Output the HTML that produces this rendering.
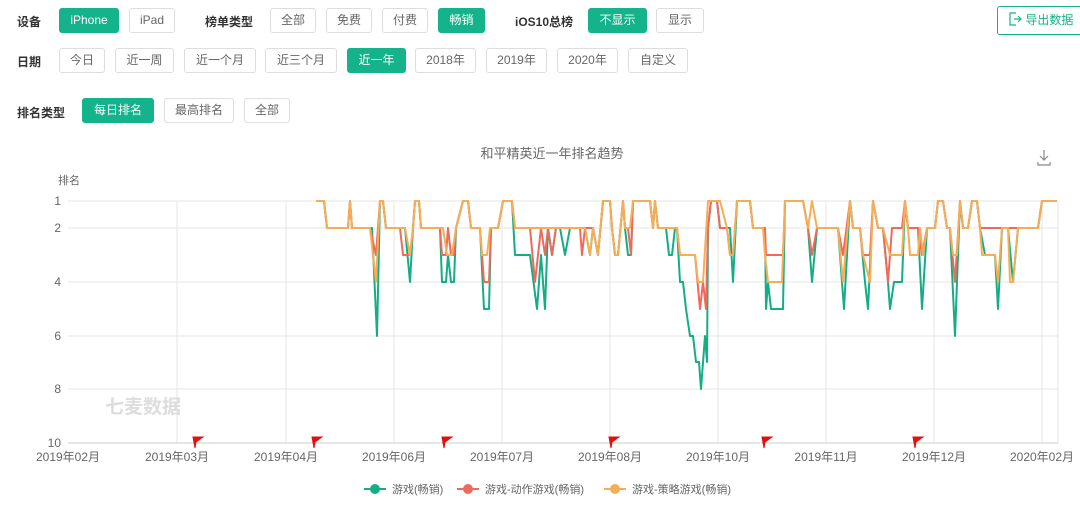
<!DOCTYPE html><html><head><meta charset="utf-8"><style>
body{margin:0;width:1080px;height:509px;background:#fff;font-family:"Liberation Sans","Noto Sans CJK SC",sans-serif;position:relative;overflow:hidden}
.l{position:absolute;font-size:12px;font-weight:bold;color:#333}
.b{position:absolute;height:23px;line-height:23px;border:1px solid #ddd;border-radius:3px;font-size:12px;color:#666;text-align:center;box-sizing:border-box;height:25px}
.a{background:#14b38b;border-color:#14b38b;color:#fff}
svg{position:absolute;left:0;top:0}
</style></head><body>
<div class="l" style="left:17px;top:13px">设备</div>
<div class="b a" style="left:59px;top:8px;width:60px">iPhone</div>
<div class="b" style="left:129px;top:8px;width:46px">iPad</div>
<div class="l" style="left:205px;top:13px">榜单类型</div>
<div class="b" style="left:270px;top:8px;width:46px">全部</div>
<div class="b" style="left:326px;top:8px;width:46px">免费</div>
<div class="b" style="left:382px;top:8px;width:46px">付费</div>
<div class="b a" style="left:438px;top:8px;width:47px">畅销</div>
<div class="l" style="left:515px;top:13px">iOS10总榜</div>
<div class="b a" style="left:588px;top:8px;width:59px">不显示</div>
<div class="b" style="left:656px;top:8px;width:48px">显示</div>
<div class="b" style="left:997px;top:6px;width:90px;height:29px;line-height:27px;border-color:#14b38b;color:#14b38b;text-align:left;padding-left:10px">
<svg width="14" height="14" style="position:relative;display:inline-block;vertical-align:-2px" viewBox="0 0 14 14"><path d="M8 1H2v12h6M6 7h7M10 4l3 3-3 3" fill="none" stroke="#14b38b" stroke-width="1.2"/></svg> 导出数据</div>
<div class="l" style="left:17px;top:53px">日期</div>
<div class="b" style="left:59px;top:48px;width:46px">今日</div>
<div class="b" style="left:115px;top:48px;width:59px">近一周</div>
<div class="b" style="left:184px;top:48px;width:72px">近一个月</div>
<div class="b" style="left:265px;top:48px;width:72px">近三个月</div>
<div class="b a" style="left:347px;top:48px;width:59px">近一年</div>
<div class="b" style="left:415px;top:48px;width:61px">2018年</div>
<div class="b" style="left:486px;top:48px;width:61px">2019年</div>
<div class="b" style="left:557px;top:48px;width:61px">2020年</div>
<div class="b" style="left:628px;top:48px;width:60px">自定义</div>
<div class="l" style="left:17px;top:104px">排名类型</div>
<div class="b a" style="left:82px;top:98px;width:72px">每日排名</div>
<div class="b" style="left:164px;top:98px;width:70px">最高排名</div>
<div class="b" style="left:244px;top:98px;width:46px">全部</div>
<svg width="1080" height="509" style="pointer-events:none">
<text x="552" y="158" font-size="13" fill="#666" text-anchor="middle" font-family="Liberation Sans,Noto Sans CJK SC,sans-serif">和平精英近一年排名趋势</text>
<path d="M1044 150v10M1040 156l4 4 4-4M1038 162v3h12v-3" fill="none" stroke="#888" stroke-width="1.2"/>
<text x="58" y="184" font-size="11" fill="#666" font-family="Liberation Sans,Noto Sans CJK SC,sans-serif">排名</text>
<g stroke="#e6e6e6" stroke-width="1">
<path d="M68 201H1058M68 228H1058M68 282H1058M68 336H1058M68 389H1058"/>
<path d="M177 201V443M286 201V443M394 201V443M502 201V443M610 201V443M718 201V443M826 201V443M934 201V443M1042 201V443M1058 201V443"/>
</g>
<path d="M68 443H1058" stroke="#ccc"/>
<g font-size="12" fill="#666" text-anchor="end" font-family="Liberation Sans,sans-serif">
<text x="61" y="205">1</text><text x="61" y="232">2</text><text x="61" y="286">4</text><text x="61" y="340">6</text><text x="61" y="393">8</text><text x="61" y="447">10</text></g>
<g font-size="12" fill="#666" text-anchor="middle" font-family="Liberation Sans,Noto Sans CJK SC,sans-serif">
<text x="68" y="461">2019年02月</text><text x="177" y="461">2019年03月</text><text x="286" y="461">2019年04月</text><text x="394" y="461">2019年06月</text><text x="502" y="461">2019年07月</text><text x="610" y="461">2019年08月</text><text x="718" y="461">2019年10月</text><text x="826" y="461">2019年11月</text><text x="934" y="461">2019年12月</text><text x="1042" y="461">2020年02月</text></g>
<text x="105" y="413" font-size="19" fill="#ddd" font-weight="bold" font-family="Liberation Sans,Noto Sans CJK SC,sans-serif">七麦数据</text>
<g fill="#e01010" stroke="#e01010">
<path d="M195 448l-2-11h10l-7 5z"/><path d="M314 448l-2-11h10l-7 5z"/><path d="M444 448l-2-11h10l-7 5z"/><path d="M611 448l-2-11h10l-7 5z"/><path d="M764 448l-2-11h10l-7 5z"/><path d="M915 448l-2-11h10l-7 5z"/></g>
<g fill="none" stroke-width="2" stroke-linejoin="round">
<polyline stroke="#14ad85" points="316,201 324,201 327,228 348,228 350,201 352,228 372,228 377,336 380,201 383,201 386,228 405,228 410,282 413,228 415,201 419,201 421,228 440,228 442,282 446,282 448,255 451,282 454,282 456,228 463,201 468,201 471,228 480,228 484,309 489,309 491,228 498,228 503,201 512,201 515,255 530,255 537,309 541,255 545,309 548,228 552,255 556,228 560,228 565,255 570,228 580,228 585,228 590,255 593,228 598,255 603,201 610,201 612,228 615,255 618,255 623,201 625,228 628,255 631,255 633,201 650,201 653,228 655,201 658,228 666,228 669,255 672,255 675,228 677,228 680,282 683,282 686,309 690,336 693,336 696,362 699,362 701,389 705,336 707,362 708,228 711,201 717,201 720,228 727,228 730,228 733,282 737,201 750,201 753,228 765,228 766,309 768,282 771,309 783,309 785,201 803,201 808,228 812,282 817,228 825,228 838,228 844,309 850,201 853,228 860,228 865,282 868,309 873,201 878,228 883,228 888,282 890,309 894,282 898,282 902,282 905,201 908,228 918,228 922,309 927,228 935,228 938,201 943,201 947,228 950,228 955,336 960,201 963,228 968,228 972,201 977,201 980,228 985,255 995,255 998,309 1002,228 1008,228 1013,282 1018,228 1038,228 1042,201 1057,201"/>
<polyline stroke="#ee6a5d" points="316,201 324,201 327,228 348,228 350,201 352,228 370,228 376,255 380,201 383,201 386,228 400,228 403,255 410,255 413,228 415,201 419,201 421,228 440,228 442,255 446,255 448,228 451,255 454,255 456,228 463,201 468,201 471,228 480,228 484,282 489,282 491,228 498,228 503,201 512,201 515,228 530,228 535,282 541,228 545,255 548,228 552,255 556,228 580,228 582,255 585,228 590,228 593,228 598,255 603,201 610,201 612,228 615,255 618,255 623,201 625,228 628,228 631,255 633,201 650,201 653,228 655,201 658,228 677,228 680,255 695,255 700,309 703,282 706,309 708,228 711,201 717,201 720,228 727,228 730,255 733,255 737,201 750,201 753,228 765,228 766,255 783,255 785,201 803,201 808,228 812,255 817,228 838,228 843,255 850,201 853,228 860,228 863,255 870,255 873,201 878,228 883,228 888,282 892,228 902,228 905,201 908,228 918,228 922,255 927,228 935,228 938,201 943,201 947,228 950,228 955,282 960,201 963,228 968,228 972,201 977,201 980,228 1038,228 1042,201 1057,201"/>
<polyline stroke="#f5ae57" points="316,201 324,201 327,228 348,228 350,201 352,228 370,228 376,282 380,201 383,201 386,228 405,228 410,255 413,228 415,201 419,201 421,228 440,228 443,228 447,255 452,255 456,228 463,201 468,201 471,228 480,228 482,255 487,255 490,228 498,228 503,201 512,201 515,228 580,228 585,228 590,255 593,228 598,255 603,201 610,201 612,228 615,255 618,255 623,201 625,228 630,228 633,201 650,201 653,228 655,201 658,228 677,228 680,255 695,255 698,282 703,282 708,201 717,201 720,201 727,228 730,255 733,255 737,201 750,201 753,228 763,228 765,255 768,282 782,282 785,201 803,201 808,228 812,201 817,228 838,228 843,282 850,201 853,228 860,228 863,255 870,282 873,201 878,228 883,228 890,255 902,255 905,201 908,228 910,255 918,255 920,228 923,255 927,228 935,228 938,201 943,201 947,228 950,228 953,255 957,255 960,201 963,228 968,228 972,201 977,201 980,228 982,255 995,255 998,282 1002,228 1008,228 1010,282 1013,282 1018,228 1038,228 1042,201 1057,201"/>
</g>
<g font-size="11" fill="#666" font-family="Liberation Sans,Noto Sans CJK SC,sans-serif">
<path d="M364 489h22" stroke="#14ad85" stroke-width="2"/><circle cx="375" cy="489" r="5" fill="#14ad85"/><text x="392" y="493">游戏(畅销)</text>
<path d="M457 489h22" stroke="#ee6a5d" stroke-width="2"/><circle cx="468" cy="489" r="5" fill="#ee6a5d"/><text x="485" y="493">游戏-动作游戏(畅销)</text>
<path d="M604 489h22" stroke="#f5ae57" stroke-width="2"/><circle cx="615" cy="489" r="5" fill="#f5ae57"/><text x="632" y="493">游戏-策略游戏(畅销)</text>
</g>
</svg>
</body></html>
